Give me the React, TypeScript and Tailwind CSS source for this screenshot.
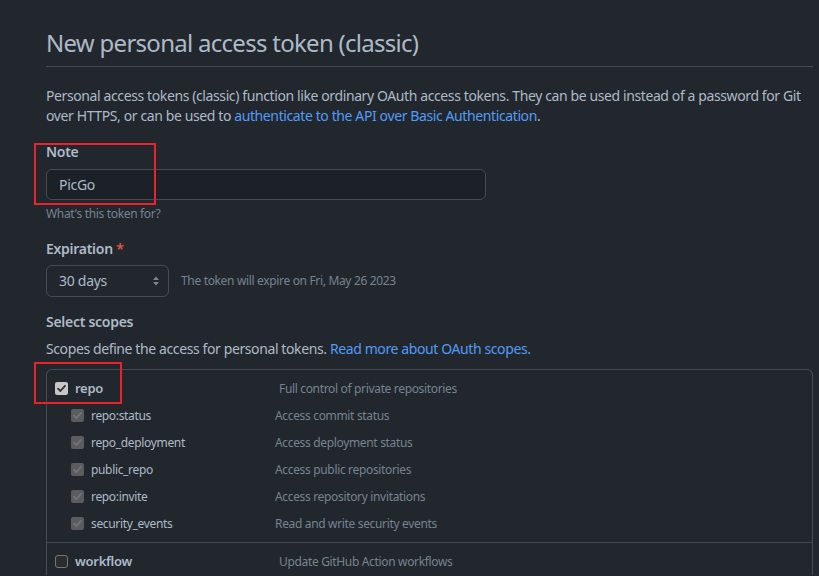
import React from 'react';

const subScopes = [
  { name: 'repo:status', desc: 'Access commit status' },
  { name: 'repo_deployment', desc: 'Access deployment status' },
  { name: 'public_repo', desc: 'Access public repositories' },
  { name: 'repo:invite', desc: 'Access repository invitations' },
  { name: 'security_events', desc: 'Read and write security events' },
];

const CheckBox = ({ state }: { state: 'on' | 'disabled' | 'off' }) => {
  if (state === 'off') {
    return <span className="block w-[13px] h-[13px] rounded-[3px] border border-[#767676] bg-[#2c2c2c] shrink-0" />;
  }
  const bg = state === 'on' ? 'bg-[#c6c6c6]' : 'bg-[#5a5c5f]';
  const stroke = state === 'on' ? '#333333' : '#727578';
  return (
    <span className={`flex items-center justify-center w-[13px] h-[13px] rounded-[2px] shrink-0 ${bg}`}>
      <svg width="11" height="11" viewBox="0 0 11 11" fill="none">
        <path d="M2 5.6 L4.4 8 L9 2.8" stroke={stroke} strokeWidth="1.8" strokeLinecap="round" strokeLinejoin="round" />
      </svg>
    </span>
  );
};

export default function App() {
  return (
    <div className="relative min-h-[576px] w-[819px] bg-[#22272e] text-[#adbac7] font-['Noto_Sans','Open_Sans',sans-serif] pl-[46px] pr-[6px] pt-[27px] overflow-hidden">
      {/* Header */}
      <div className="border-b border-[#444c56] pb-[8px]">
        <h1 className="text-[24px] leading-[31px] font-normal tracking-[-0.03em]">New personal access token (classic)</h1>
      </div>

      <p className="mt-[19px] text-[14px] leading-[20px] tracking-[-0.028em]">
        Personal access tokens (classic) function like ordinary OAuth access tokens. They can be used instead of a password for Git over HTTPS, or can be used to{' '}
        <span className="text-[#539bf5]">authenticate to the API over Basic Authentication</span>.
      </p>

      {/* Note */}
      <div className="mt-[16px]">
        <div className="text-[14px] leading-[20px] font-semibold tracking-[-0.02em]">Note</div>
        <div className="mt-[7px] w-[440px] h-[31px] rounded-[6px] border border-[#444c56] bg-[#1c2128] flex items-center px-[12px] text-[14px] tracking-[-0.02em]">
          PicGo
        </div>
        <div className="mt-[5px] text-[12px] leading-[18px] text-[#768390] tracking-[-0.028em]">What's this token for?</div>
      </div>

      {/* Expiration */}
      <div className="mt-[16px]">
        <div className="text-[14px] leading-[20px] font-semibold tracking-[-0.02em]">
          Expiration <span className="text-[#e5534b]">*</span>
        </div>
        <div className="mt-[6px] flex items-center gap-[12px]">
          <div className="w-[123px] h-[32px] rounded-[6px] border border-[#444c56] bg-[#22272e] flex items-center justify-between pl-[12px] pr-[8px] text-[14px] leading-[20px] tracking-[-0.02em]">
            <span>30 days</span>
            <svg width="8" height="14" viewBox="0 0 8 14" fill="#768390">
              <path d="M4 2.5 L7 6 L1 6 Z" />
              <path d="M4 11.5 L7 8 L1 8 Z" />
            </svg>
          </div>
          <span className="text-[12px] text-[#768390] tracking-[-0.028em]">The token will expire on Fri, May 26 2023</span>
        </div>
      </div>

      {/* Scopes */}
      <div className="mt-[15px]">
        <div className="text-[14px] leading-[20px] font-semibold tracking-[-0.02em]">Select scopes</div>
        <p className="mt-[7px] text-[14px] leading-[20px] tracking-[-0.028em]">
          Scopes define the access for personal tokens.{' '}
          <span className="text-[#539bf5]">Read more about OAuth scopes.</span>
        </p>

        <div className="mt-[10px] border border-[#444c56] rounded-t-[6px] border-b-0">
          <div className="pt-[5px] pb-[5px] border-b border-[#444c56]">
            <div className="flex items-center h-[27px] pl-[8px]">
              <CheckBox state="on" />
              <span className="ml-[7px] w-[204px] text-[13px] font-semibold tracking-[-0.02em]">repo</span>
              <span className="text-[12px] text-[#768390] tracking-[-0.028em]">Full control of private repositories</span>
            </div>
            {subScopes.map(s => (
              <div key={s.name} className="flex items-center h-[27px] pl-[24px]">
                <CheckBox state="disabled" />
                <span className="ml-[7px] w-[184px] text-[12px] tracking-[-0.028em]">{s.name}</span>
                <span className="text-[12px] text-[#768390] tracking-[-0.028em]">{s.desc}</span>
              </div>
            ))}
          </div>
          <div className="pt-[5px]">
            <div className="flex items-center h-[27px] pl-[8px]">
              <CheckBox state="off" />
              <span className="ml-[7px] w-[204px] text-[13px] font-semibold tracking-[-0.02em]">workflow</span>
              <span className="text-[12px] text-[#768390] tracking-[-0.028em]">Update GitHub Action workflows</span>
            </div>
          </div>
        </div>
      </div>

      {/* Annotation boxes */}
      <div className="absolute left-[34px] top-[143px] w-[122px] h-[62px] border-2 border-[#e8232b]" />
      <div className="absolute left-[34px] top-[362px] w-[88px] h-[42px] border-2 border-[#e8232b]" />
    </div>
  );
}
